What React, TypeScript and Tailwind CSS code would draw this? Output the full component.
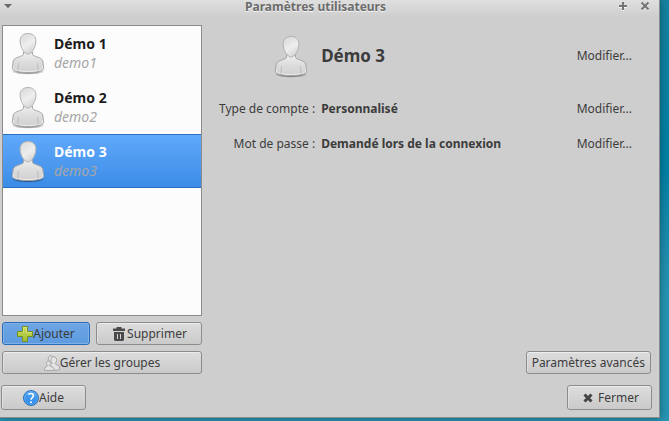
import type { ReactNode } from "react";
import clsx from "clsx";

const users = [
  { name: "Démo 1", login: "demo1" },
  { name: "Démo 2", login: "demo2" },
  { name: "Démo 3", login: "demo3" },
];

const Gradients = () => (
  <svg className="absolute size-0" aria-hidden="true">
    <defs>
      <linearGradient id="head" x1="0.2" y1="0" x2="0.7" y2="1">
        <stop offset="0" stopColor="#dadada" />
        <stop offset="0.55" stopColor="#eeeeee" />
        <stop offset="1" stopColor="#d2d2d2" />
      </linearGradient>
      <linearGradient id="body" x1="0" y1="0" x2="0" y2="1">
        <stop offset="0" stopColor="#efefef" />
        <stop offset="0.5" stopColor="#dcdcdc" />
        <stop offset="1" stopColor="#d0d0d0" />
      </linearGradient>
      <linearGradient id="plus" x1="0" y1="0" x2="0" y2="1">
        <stop offset="0" stopColor="#cfdc5a" />
        <stop offset="1" stopColor="#9fbf35" />
      </linearGradient>
      <linearGradient id="help" x1="0" y1="0" x2="0" y2="1">
        <stop offset="0" stopColor="#4fa3f0" />
        <stop offset="1" stopColor="#2f8ae6" />
      </linearGradient>
      <radialGradient id="shade">
        <stop offset="0.6" stopColor="#000" stopOpacity="0.4" />
        <stop offset="1" stopColor="#000" stopOpacity="0" />
      </radialGradient>
    </defs>
  </svg>
);

const Avatar = () => (
  <svg className="h-11 w-9 shrink-0" viewBox="0 0 36 44" aria-hidden="true">
    <ellipse cx="18" cy="40.500" rx="16.5" ry="3.2" fill="url(#shade)" />
    <path
      d="M13.500 21v2.500c-.5 1-2 1.500-4 2.200C6 27 3.600 28 3.200 30L2.300 37.500c0 2.300 7 4 15.700 4s15.700-1.700 15.700-4L32.800 30c-.4-2-2.800-3-6.300-4.300-2-.7-3.500-1.200-4-2.200V21z"
      fill="url(#body)"
      stroke="#a6a6a6"
    />
    <path d="M3.600 35l-.2 2.500c0 1.500 6.500 3 14.600 3s14.600-1.500 14.600-3l-.2-2.500" fill="none" stroke="#ececec" />
    <path d="M8.500 32l-.7 7.500M27.500 32l.7 7.500" stroke="#bcbcbc" fill="none" />
    <path
      d="M18 2.500c-5 0-7.900 3-7.900 7.500 0 5.800 4 13 7.900 13s7.900-7.200 7.900-13c0-4.500-2.900-7.500-7.900-7.500z"
      fill="url(#head)"
      stroke="#b2b2b2"
    />
  </svg>
);

const PlusIcon = () => (
  <svg className="size-4 shrink-0" viewBox="0 0 16 16" aria-hidden="true">
    <path d="M5.500.5h5v5h5v5h-5v5h-5v-5h-5v-5h5z" fill="url(#plus)" stroke="#76901c" strokeLinejoin="round" />
    <path d="M6.500 6.500v-5h3v5h5" fill="none" stroke="#e6efa0" strokeOpacity="0.6" />
  </svg>
);

const TrashIcon = () => (
  <svg className="size-4 shrink-0" viewBox="0 0 16 16" aria-hidden="true">
    <path d="M5.500 1h5v1.500H14V5H2V2.500h3.500z" fill="#4a4a4a" />
    <path d="M3 6h10v7.500a1.500 1.500 0 0 1-1.500 1.500h-7A1.500 1.500 0 0 1 3 13.500z" fill="#4a4a4a" />
    <path d="M6.500 8v5M9.500 8v5" stroke="#d4d4d4" />
  </svg>
);

const GroupIcon = () => (
  <svg className="size-4 shrink-0" viewBox="0 0 16 16" aria-hidden="true">
    <g fill="#e4e4e4" stroke="#a4a4a4" strokeLinejoin="round">
      <path d="M5.500 6.500C3.500 4.500 4 .8 6.800.8s3.300 3.700 1.200 5.700" />
      <path d="M8.500 8.500C6 6.500 6.500 1.800 9.800 1.800s3.500 4.700 1.300 6.700c.3 1.200 3.900 1.200 4.400 3.500v2.500c-1.500 1-7.500 1-9 0" />
      <path d="M3.700 10.500C1.800 9 2 6 4.400 6s2.800 3 .9 4.500c.5 1 4 1 4.700 3V15c-1.500.7-8 .7-9.500 0v-1.500c.3-1.700 3-1.700 3.200-3z" />
    </g>
  </svg>
);

const HelpIcon = () => (
  <svg className="size-4 shrink-0" viewBox="0 0 16 16" aria-hidden="true">
    <circle cx="8" cy="8" r="7.500" fill="url(#help)" stroke="#2c6db5" />
    <circle cx="8" cy="8" r="6.500" fill="none" stroke="#8cc8ff" strokeOpacity="0.4" />
    <path d="M5.500 4.800C6 2.800 10.500 3 10.500 5.600 10.500 7.500 8 7.600 8 9.800" fill="none" stroke="#fff" strokeWidth="1.600" />
    <circle cx="8" cy="12.200" r="1" fill="#fff" />
  </svg>
);

const CrossIcon = () => (
  <svg className="size-4 shrink-0" viewBox="0 0 16 16" aria-hidden="true">
    <path d="M4.500 4.500l7 7M11.500 4.500l-7 7" stroke="#444" strokeWidth="3" />
  </svg>
);

type PushButtonProps = {
  children: ReactNode;
  className?: string;
  active?: boolean;
};

const PushButton = ({ children, className, active }: PushButtonProps) => (
  <button
    type="button"
    className={clsx(
      "flex items-center justify-center rounded-[3px] border whitespace-nowrap",
      active
        ? "border-[#2a6bb8] bg-linear-to-b from-[#6ea6e4] to-[#5d9adf] shadow-[inset_0_0_0_1px_#7fb1e8]"
        : "border-[#8c8c8c] bg-linear-to-b from-[#dddddd] to-[#cacaca] shadow-[inset_0_1px_0_#ececec,inset_1px_0_0_#e0e0e0]",
      className,
    )}
  >
    {children}
  </button>
);

const EditButton = () => (
  <button type="button" className="whitespace-nowrap">
    Modifier...
  </button>
);

const TitleBar = () => (
  <header className="flex h-[17px] items-start bg-linear-to-b from-[#dfdfdf] to-[#cecece] pr-2 pl-1">
    <button type="button" aria-label="Menu de la fenêtre" className="h-3 w-3">
      <svg className="h-3 w-3" viewBox="0 0 12 12" aria-hidden="true">
        <path d="M0 5h8L4 9.500z" fill="#fff" fillOpacity="0.7" />
        <path d="M0 4h8L4 8.500z" fill="#6a6a6a" />
      </svg>
    </button>
    <h1 className="flex-1 pr-0.5 text-center leading-[14px] font-bold text-[#6c6c6c] [text-shadow:0_1px_0_#f4f4f4]">
      Paramètres utilisateurs
    </h1>
    <div className="flex gap-2.5">
      <button type="button" aria-label="Agrandir" className="h-3 w-3">
        <svg className="h-3 w-3" viewBox="0 0 12 12" aria-hidden="true">
          <path d="M2 7h8M6 3v8" stroke="#f4f4f4" strokeWidth="2" />
          <path d="M2 6h8M6 2v8" stroke="#747474" strokeWidth="2" />
        </svg>
      </button>
      <button type="button" aria-label="Fermer la fenêtre" className="h-3 w-3">
        <svg className="h-3 w-3" viewBox="0 0 12 12" aria-hidden="true">
          <path d="M2.500 3.500l7 7M9.500 3.500l-7 7" stroke="#f4f4f4" strokeWidth="2" />
          <path d="M2.500 2.500l7 7M9.500 2.500l-7 7" stroke="#747474" strokeWidth="2" />
        </svg>
      </button>
    </div>
  </header>
);

const UserList = () => (
  <ul className="flex-1 border border-[#8c8c8c] bg-[#fcfcfc]">
    {users.map((user) => {
      const selected = user.login === "demo3";
      return (
        <li key={user.login}>
          <button
            type="button"
            aria-pressed={selected}
            className={clsx(
              "flex h-[54px] w-full items-center gap-2 border-y pl-[7px] text-left",
              selected
                ? "border-[#2a6fc0] bg-linear-to-b from-[#60a9fb] to-[#3b8ce6]"
                : "border-transparent",
            )}
          >
            <Avatar />
            <span className="flex flex-col leading-[19px]">
              <span className={clsx("text-[14px] font-bold", selected ? "text-white" : "text-[#1c1c1c]")}>
                {user.name}
              </span>
              <span className="text-[14px] text-[#a6a6a6] italic">{user.login}</span>
            </span>
          </button>
        </li>
      );
    })}
  </ul>
);

const UserDetails = () => (
  <section className="flex flex-1 flex-col justify-between">
    <div className="grid grid-cols-[auto_1fr_auto] items-center gap-x-1.5 pr-[27px] pl-[17px]">
      <div className="flex h-[62px] items-center justify-end pr-1.5">
        <Avatar />
      </div>
      <h2 className="text-[17px] font-bold">Démo 3</h2>
      <EditButton />

      <span className="mt-1 py-2 text-right leading-[19px]">Type de compte :</span>
      <strong className="mt-1">Personnalisé</strong>
      <div className="mt-1">
        <EditButton />
      </div>

      <span className="py-2 text-right leading-[19px]">Mot de passe :</span>
      <strong>Demandé lors de la connexion</strong>
      <EditButton />
    </div>
    <PushButton className="mr-2 h-[23px] self-end px-[5px]">Paramètres avancés</PushButton>
  </section>
);

export default function App() {
  return (
    <div className="flex min-h-screen bg-linear-to-b from-[#1583a0] via-[#0080a3] via-40% to-[#2795b3] to-70% pr-[9px] pb-[3px] font-['Noto_Sans',sans-serif] text-[12px] text-[#3c3c3c]">
      <Gradients />
      <div className="flex flex-1 flex-col border-r border-b border-[#8a8a8a] bg-[#cecece] shadow-[0_0_8px_rgba(0,40,50,0.5)]">
        <TitleBar />
        <main className="flex flex-1 pt-2">
          <section className="ml-0.5 flex w-[200px] flex-col gap-1.5">
            <UserList />
            <div className="flex gap-1.5">
              <PushButton active className="h-[23px] w-[88px]">
                <PlusIcon />
                Ajouter
              </PushButton>
              <PushButton className="h-[23px] flex-1">
                <TrashIcon />
                Supprimer
              </PushButton>
            </div>
            <PushButton className="h-[23px]">
              <GroupIcon />
              Gérer les groupes
            </PushButton>
          </section>
          <UserDetails />
        </main>
        <footer className="flex justify-between pt-[11px] pr-[7px] pb-[7px] pl-px">
          <PushButton className="h-[25px] w-[85px]">
            <HelpIcon />
            Aide
          </PushButton>
          <PushButton className="h-[25px] w-[85px] gap-0.5">
            <CrossIcon />
            Fermer
          </PushButton>
        </footer>
      </div>
    </div>
  );
}
